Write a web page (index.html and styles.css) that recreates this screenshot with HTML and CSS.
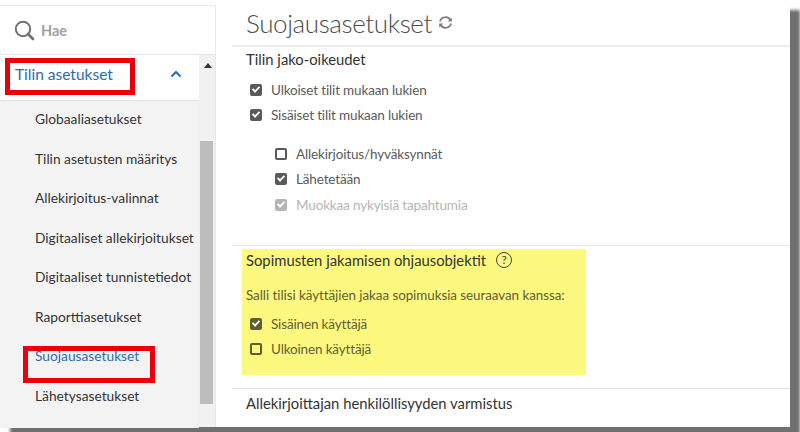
FILE: index.html
```html
<!DOCTYPE html>
<html lang="fi">
<head>
    <meta charset="UTF-8">
    <meta name="viewport" content="width=device-width, initial-scale=1.0">
    <title>Suojausasetukset</title>
    <link rel="stylesheet" href="styles.css">
</head>
<body>
    <div class="window">
        <!-- Sivupalkki -->
        <aside class="sidebar">
            <div class="search">
                <svg class="search-icon" width="22" height="22" viewBox="0 0 22 22">
                    <circle cx="10" cy="10" r="7.2" fill="none" stroke="#707070" stroke-width="2"/>
                    <path d="M15 15l5 5" stroke="#707070" stroke-width="2.6" stroke-linecap="round"/>
                </svg>
                <span>Hae</span>
            </div>
            <div class="menu">
                <div class="menu-list">
                    <div class="menu-head">
                        <a href="#">Tilin asetukset</a>
                        <svg width="12" height="8" viewBox="0 0 12 8">
                            <path d="M1.5 6.5L6 2l4.500 4.500" fill="none" stroke="#2b6cb0" stroke-width="2"/>
                        </svg>
                    </div>
                    <ul class="menu-items">
                        <li>Globaaliasetukset</li>
                        <li>Tilin asetusten määritys</li>
                        <li>Allekirjoitus-valinnat</li>
                        <li>Digitaaliset allekirjoitukset</li>
                        <li>Digitaaliset tunnistetiedot</li>
                        <li>Raporttiasetukset</li>
                        <li class="active">Suojausasetukset</li>
                        <li>Lähetysasetukset</li>
                    </ul>
                </div>
                <div class="scrollbar">
                    <div class="scroll-arrow"></div>
                    <div class="scroll-thumb"></div>
                </div>
            </div>
            <div class="red-box box-head"></div>
            <div class="red-box box-item"></div>
        </aside>

        <!-- Sisältö -->
        <main class="content">
            <div class="title-row">
                <h1>Suojausasetukset</h1>
                <svg width="15" height="15" viewBox="0 0 15 15">
                    <path d="M2 6.500A5.600 5.600 0 0 1 12.300 5M13 8.500A5.600 5.600 0 0 1 2.700 10" fill="none" stroke="#7a7a7a" stroke-width="1.700"/>
                    <path d="M13.800 2.500v4h-4zM1.200 12.500v-4h4z" fill="#7a7a7a"/>
                </svg>
            </div>

            <section class="share-rights">
                <h2>Tilin jako-oikeudet</h2>
                <label class="check"><span class="box on"></span>Ulkoiset tilit mukaan lukien</label>
                <label class="check"><span class="box on"></span>Sisäiset tilit mukaan lukien</label>
                <div class="sub-checks">
                    <label class="check"><span class="box"></span>Allekirjoitus/hyväksynnät</label>
                    <label class="check"><span class="box on"></span>Lähetetään</label>
                    <label class="check disabled"><span class="box on"></span>Muokkaa nykyisiä tapahtumia</label>
                </div>
            </section>

            <section class="controls">
                <div class="highlight">
                    <h2>Sopimusten jakamisen ohjausobjektit <span class="help">?</span></h2>
                    <p>Salli tilisi käyttäjien jakaa sopimuksia seuraavan kanssa:</p>
                    <label class="check"><span class="box on"></span>Sisäinen käyttäjä</label>
                    <label class="check"><span class="box"></span>Ulkoinen käyttäjä</label>
                </div>
            </section>

            <section class="verify">
                <h2>Allekirjoittajan henkilöllisyyden varmistus</h2>
            </section>
        </main>
    </div>
</body>
</html>
```

FILE: styles.css
```css
html, body {
    height: 432px;
    overflow: hidden;
}
body {
    margin: 0;
    background-color: #fff;
    color: #4b4b4b;
    font-family: Lato, Arial, sans-serif;
}
.window {
    display: flex;
    width: 790px;
    height: 427px;
    background-color: #fff;
    box-shadow: 10px 10px 3px #6f6f6f;
}
.sidebar {
    position: relative;
    display: flex;
    flex-direction: column;
    width: 215px;
    margin-top: 5px;
    border-top: 1px solid #eaeaea;
    border-right: 1px solid #e8e8e8;
}
.search {
    display: flex;
    align-items: center;
    gap: 6px;
    height: 48px;
    padding-left: 13px;
    border-bottom: 1px solid #e4e4e4;
    color: #a0a0a0;
    font-size: 14.500px;
    font-weight: 700;
}
.menu {
    flex: 1;
    display: flex;
    min-height: 0;
}
.menu-list {
    flex: 1;
}
.menu-head {
    display: flex;
    align-items: center;
    justify-content: space-between;
    box-sizing: border-box;
    height: 46px;
    padding: 0 17px 8px 15px;
    border-bottom: 1px solid #e0e0e0;
}
.menu-head a {
    color: #2b6cb0;
    font-size: 15.500px;
    text-decoration: none;
}
.menu-items {
    list-style: none;
    margin: 0;
    padding: 0 0 0 35px;
    height: 327px;
    background-color: #f3f3f3;
    color: #333;
    font-size: 13.750px;
}
.menu-items li {
    height: 39.500px;
    line-height: 36px;
    white-space: nowrap;
}
.menu-items .active {
    color: #2b6cb0;
}
.scrollbar {
    width: 16px;
    background-color: #f1f1f1;
    padding-left: 1px;
    box-sizing: border-box;
}
.scroll-arrow {
    width: 0;
    margin: 8px auto 0;
    border-left: 4px solid transparent;
    border-right: 4px solid transparent;
    border-bottom: 5px solid #333;
}
.scroll-thumb {
    height: 263px;
    margin: 73px 2px 0 0;
    background-color: #bdbdbd;
}
.red-box {
    position: absolute;
    box-sizing: border-box;
    border: 5px solid #e8000d;
}
.box-head {
    left: 5px;
    top: 52px;
    width: 130px;
    height: 37px;
}
.box-item {
    left: 23px;
    top: 340px;
    width: 132px;
    height: 37px;
}
.content {
    flex: 1;
    min-width: 0;
    padding-left: 16px;
}
.title-row {
    display: flex;
    align-items: center;
    gap: 6px;
    height: 45px;
    padding-left: 14px;
    border-bottom: 2px solid #eeeeee;
}
h1 {
    margin: 0;
    color: #4b4b4b;
    font-size: 26px;
    font-weight: 300;
    letter-spacing: -0.4px;
}
h2 {
    margin: 0;
    color: #333;
    font-size: 14.800px;
    font-weight: 400;
}
.check {
    display: flex;
    align-items: center;
    gap: 9px;
    height: 25.500px;
    font-size: 13.500px;
    letter-spacing: -0.15px;
    color: #5a5a5a;
}
.box {
    position: relative;
    flex: none;
    box-sizing: border-box;
    width: 12px;
    height: 12px;
    margin-left: 4px;
    border: 2px solid #5a5a5a;
    border-radius: 2px;
}
.box.on {
    background-color: #5a5a5a;
}
.box.on::after {
    content: "";
    position: absolute;
    left: 0;
    top: 0;
    width: 8px;
    height: 5px;
    border-left: 2px solid #fff;
    border-bottom: 2px solid #fff;
    transform: rotate(-45deg) scale(0.9);
    box-sizing: border-box;
}
.share-rights {
    box-sizing: border-box;
    height: 199px;
    padding: 3px 0 0 14px;
    border-bottom: 1px solid #e6e6e6;
}
.share-rights h2 {
    height: 20px;
    margin-bottom: 7px;
}
.sub-checks {
    margin: 13px 0 0 25px;
}
.disabled {
    color: #b5b5b5;
}
.disabled .box {
    background-color: #b5b5b5;
    border-color: #b5b5b5;
}
.controls {
    box-sizing: border-box;
    height: 143px;
    padding: 3px 0 0 10px;
    border-bottom: 1px solid #e0e0e0;
}
.highlight {
    box-sizing: border-box;
    width: 344px;
    height: 126px;
    padding: 1px 0 0 4px;
    background-color: #fdf97f;
}
.highlight h2 {
    display: flex;
    align-items: center;
    gap: 10px;
    height: 20px;
}
.highlight p {
    margin: 17px 0 8px;
    font-size: 13.400px;
    letter-spacing: -0.05px;
    color: #5f5e32;
}
.highlight .check {
    color: #5f5e32;
}
.highlight .box {
    border-color: #5f5e32;
}
.highlight .box.on {
    background-color: #5f5e32;
}
.help {
    display: inline-block;
    box-sizing: border-box;
    width: 16px;
    height: 16px;
    border: 1.500px solid #444;
    border-radius: 50%;
    font-size: 11px;
    line-height: 13px;
    text-align: center;
}
.verify {
    padding: 5px 0 0 14px;
}
```
